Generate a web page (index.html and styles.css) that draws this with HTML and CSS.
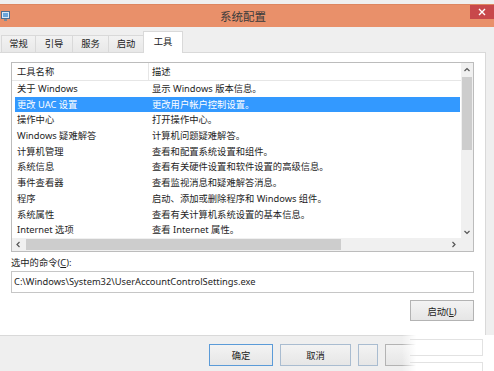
FILE: index.html
```html
<!DOCTYPE html>
<html lang="zh-CN">
<head>
    <meta charset="UTF-8">
    <title>系统配置</title>
    <link rel="stylesheet" href="styles.css">
</head>
<body>
    <div class="window">
        <div class="titlebar">
            <svg class="app-icon" width="9" height="11" viewBox="0 0 9 11">
                <rect x="0.5" y="0.5" width="8" height="7" fill="#dbe9f6" stroke="#4d6f93"/>
                <rect x="2" y="2" width="5" height="4" fill="#6aa6dc"/>
                <rect x="3" y="8" width="3" height="2" fill="#7d8a98"/>
            </svg>
            <div class="title">系统配置</div>
            <div class="close">
                <svg width="8" height="8" viewBox="0 0 8 8">
                    <path d="M1 1L7 7M7 1L1 7" stroke="#fff" stroke-width="1.4"/>
                </svg>
            </div>
        </div>

        <div class="tabs">
            <div class="tab t1">常规</div>
            <div class="tab t2">引导</div>
            <div class="tab t3">服务</div>
            <div class="tab t4">启动</div>
            <div class="tab active">工具</div>
        </div>

        <div class="panel">
            <div class="list">
                <div class="list-body">
                    <div class="list-head">
                        <span class="col-name">工具名称</span>
                        <span class="col-desc">描述</span>
                    </div>
                    <div class="row"><span>关于 Windows</span><span>显示 Windows 版本信息。</span></div>
                    <div class="row selected"><span>更改 UAC 设置</span><span>更改用户帐户控制设置。</span></div>
                    <div class="row"><span>操作中心</span><span>打开操作中心。</span></div>
                    <div class="row"><span>Windows 疑难解答</span><span>计算机问题疑难解答。</span></div>
                    <div class="row"><span>计算机管理</span><span>查看和配置系统设置和组件。</span></div>
                    <div class="row"><span>系统信息</span><span>查看有关硬件设置和软件设置的高级信息。</span></div>
                    <div class="row"><span>事件查看器</span><span>查看监视消息和疑难解答消息。</span></div>
                    <div class="row"><span>程序</span><span>启动、添加或删除程序和 Windows 组件。</span></div>
                    <div class="row"><span>系统属性</span><span>查看有关计算机系统设置的基本信息。</span></div>
                    <div class="row"><span>Internet 选项</span><span>查看 Internet 属性。</span></div>
                </div>
                <div class="vscroll">
                    <svg class="arrow" width="12" height="13" viewBox="0 0 12 13">
                        <path d="M3.5 8L6 5.5L8.5 8" fill="none" stroke="#555" stroke-width="1.2"/>
                    </svg>
                    <div class="vthumb"></div>
                    <svg class="arrow arrow-end" width="12" height="12" viewBox="0 0 12 12">
                        <path d="M3.5 5L6 7.5L8.5 5" fill="none" stroke="#555" stroke-width="1.2"/>
                    </svg>
                </div>
                <div class="hscroll">
                    <svg class="arrow" width="13" height="13" viewBox="0 0 13 13">
                        <path d="M7.5 4L5 6.5L7.5 9" fill="none" stroke="#555" stroke-width="1.2"/>
                    </svg>
                    <div class="hthumb"></div>
                    <svg class="arrow arrow-end" width="13" height="13" viewBox="0 0 13 13">
                        <path d="M5.5 4L8 6.5L5.5 9" fill="none" stroke="#555" stroke-width="1.2"/>
                    </svg>
                </div>
                <div class="corner"></div>
            </div>

            <div class="cmd-label">选中的命令(<u>C</u>):</div>
            <div class="cmd-box">C:\Windows\System32\UserAccountControlSettings.exe</div>
            <button class="btn launch">启动(<u>L</u>)</button>
        </div>

        <div class="footer">
            <button class="btn ok">确定</button>
            <button class="btn cancel">取消</button>
            <button class="btn small"></button>
            <button class="btn apply"></button>
            <div class="smudge">
                <div class="ghost-box"></div>
                <div class="ghost-box"></div>
            </div>
        </div>
    </div>
</body>
</html>
```

FILE: styles.css
```css
body {
    margin: 0;
    background: #f7f7f7;
    font-family: "Noto Sans", "Noto Sans CJK SC", sans-serif;
    font-size: 9.3px;
    color: #1e1e1e;
}
.window {
    width: 494px;
    height: 371px;
    overflow: hidden;
    display: flex;
    flex-direction: column;
    background: #efefef;
    position: relative;
}
.titlebar {
    margin-top: 4px;
    height: 23px;
    background: #e9906a;
    display: grid;
    grid-template-columns: 1fr auto 1fr;
    align-items: center;
    border-top: 1px solid #dd8660;
    box-sizing: border-box;
}
.app-icon {
    margin-left: 1px;
}
.title {
    font-size: 11.5px;
    color: #3a3a3a;
    margin-right: 8px;
}
.close {
    justify-self: end;
    align-self: start;
    width: 24px;
    height: 14px;
    background: #c8484b;
    display: flex;
    align-items: center;
    justify-content: center;
}
.tabs {
    height: 25px;
    display: flex;
    align-items: flex-end;
    padding-left: 1px;
}
.tab {
    height: 17px;
    line-height: 16px;
    box-sizing: border-box;
    text-align: center;
    border: 1px solid #d9d9d9;
    border-bottom: none;
    border-right: none;
    background: linear-gradient(#f2f2f2, #e8e8e8);
    color: #222;
}
.t1 { width: 34px; }
.t2 { width: 37px; }
.t3 { width: 36px; }
.t4 { width: 35px; }
.tab.active {
    width: 40px;
    height: 22px;
    line-height: 20px;
    background: #fff;
    border-right: 1px solid #d9d9d9;
    margin-bottom: -1px;
    position: relative;
    z-index: 1;
}
.panel {
    width: 486px;
    height: 284px;
    box-sizing: border-box;
    background: #fff;
    border: 1px solid #d9d9d9;
    border-left: none;
    padding: 9px 11px 0 11px;
    display: flex;
    flex-direction: column;
}
.list {
    height: 190px;
    box-sizing: border-box;
    border: 1px solid #bcbcbc;
    display: grid;
    grid-template-columns: 1fr 12px;
    grid-template-rows: 175px 13px;
}
.list-body {
    overflow: hidden;
}
.list-head {
    height: 17px;
    line-height: 17px;
    border-bottom: 1px solid #e6e6e6;
    display: grid;
    grid-template-columns: 136px 1fr;
}
.col-name {
    padding-left: 5px;
}
.col-desc {
    border-left: 1px solid #e6e6e6;
    padding-left: 3px;
}
.row {
    height: 15.7px;
    line-height: 16.5px;
    margin: 0 1px 0 3px;
    display: grid;
    grid-template-columns: 137px 1fr;
    white-space: nowrap;
}
.row span:first-child {
    padding-left: 2px;
}
.row.selected {
    background: #3399ff;
    color: #fff;
}
.vscroll {
    background: #f0f0f0;
    display: flex;
    flex-direction: column;
    align-items: center;
}
.vthumb {
    width: 10px;
    height: 73px;
    margin-top: 1px;
    background: #cdcdcd;
}
.arrow {
    flex: none;
    display: block;
}
.arrow-end {
    margin-top: auto;
}
.hscroll {
    background: #f0f0f0;
    display: flex;
    align-items: center;
}
.hthumb {
    width: 315px;
    height: 11px;
    margin-left: 1px;
    background: #cdcdcd;
}
.hscroll .arrow-end {
    margin-top: 0;
    margin-left: auto;
    margin-right: 1px;
}
.corner {
    background: #f0f0f0;
}
.cmd-label {
    margin-top: 4px;
    height: 13px;
    line-height: 13px;
}
.cmd-box {
    margin-top: 2px;
    height: 22px;
    line-height: 20px;
    box-sizing: border-box;
    border: 1px solid #c6c6c6;
    padding-left: 2px;
}
.btn {
    font-family: inherit;
    font-size: 9.3px;
    color: #222;
    height: 22px;
    padding: 0;
    box-sizing: border-box;
    border: 1px solid #b3b3b3;
    background: linear-gradient(#f3f3f3, #e6e6e6);
}
.launch {
    align-self: flex-end;
    margin-top: 7px;
    width: 64px;
    height: 21px;
}
.footer {
    flex: 1;
    width: 486px;
    box-sizing: border-box;
    border-right: 1px solid #d9d9d9;
    display: flex;
    align-items: flex-start;
    gap: 7px;
    padding: 8px 0 0 209px;
    position: relative;
}
.ok {
    width: 64px;
    border-color: #5b9bd8;
}
.cancel {
    width: 71px;
    border-color: #a9bcd0;
}
.small {
    width: 20px;
    border-color: #a9bcd0;
}
.apply {
    width: 88px;
}
.smudge {
    position: absolute;
    left: 402px;
    top: -1px;
    width: 92px;
    height: 40px;
    background: linear-gradient(to right, rgba(255, 255, 255, 0), #fff 14px);
    padding: 4px 0 0 8px;
    box-sizing: border-box;
}
.ghost-box {
    width: 72px;
    height: 15px;
    border: 1px solid #e2e2e2;
    border-left: none;
    margin-bottom: 6px;
}
```
